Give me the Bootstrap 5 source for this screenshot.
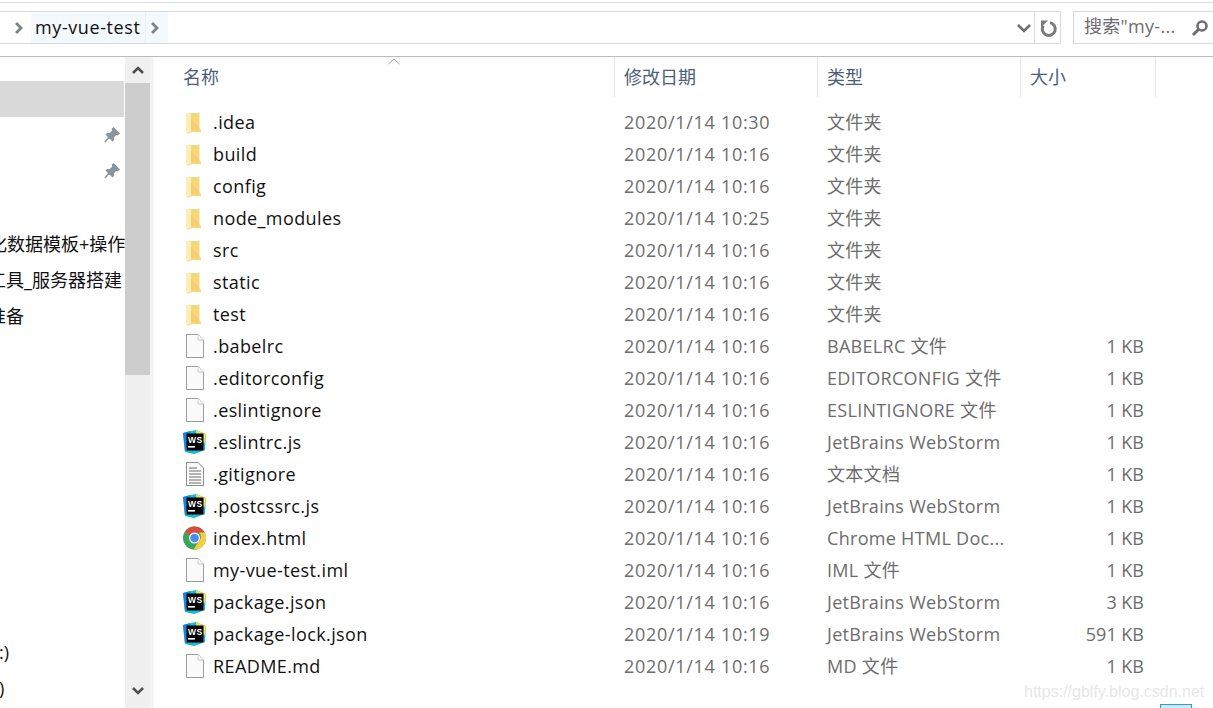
<!DOCTYPE html>
<html lang="zh-CN" class="h-100">
<head>
    <meta charset="UTF-8">
    <meta name="viewport" content="width=device-width, initial-scale=1.0">
    <title>my-vue-test</title>
    <link href="https://cdn.jsdelivr.net/npm/bootstrap@5.3.3/dist/css/bootstrap.min.css" rel="stylesheet">
    <style>
        html, body { height: 708px; overflow: hidden; }
        body {
            font-family: "Open Sans", "Noto Sans CJK SC", sans-serif;
            font-size: 18px;
            color: #111;
            background: #fff;
        }
        .top-rule { height: 1px; margin-top: 2px; background: #dcdfe4; }
        .tool-bar { padding-top: 8px; padding-bottom: 12px; border-bottom: 1px solid #bcbcbc; }
        .addr-box { width: 1061px; height: 33px; border: 1px solid #d9d9d9; border-left: 0; }
        .crumb-arrow { width: 31px; padding-left: 7px; }
        .crumb-name { height: 31px; padding: 0 4px; background: #f3f9fe; border-right: 1px solid #e6f0fa; line-height: 30px; letter-spacing: .6px; }
        .crumb-next { width: 22px; height: 31px; background: #f3f9fe; padding-right: 3px; }
        .addr-end { width: 26px; height: 31px; border-left: 1px solid #d9d9d9; padding-left: 2px; }
        .addr-drop { width: 20px; }
        .search-box { width: 152px; height: 33px; margin-left: 12px; border: 1px solid #d9d9d9; border-right: 0; color: #6d6d6d; padding-left: 10px; line-height: 29px; }
        .search-text { width: 99px; letter-spacing: .3px; }
        .side-pane { width: 150px; }
        .side-list { width: 125px; padding-top: 24px; }
        .side-row { height: 36px; line-height: 38px; white-space: nowrap; overflow: hidden; }
        .side-row.is-selected { background: #d9d9d9; width: 124px; }
        .side-gap { height: 12px; }
        .side-text { display: block; }
        .side-pin { width: 124px; padding-right: 4px; }
        .scroll-track { width: 25px; background: #f0f0f0; }
        .scroll-btn { height: 26px; }
        .scroll-thumb { height: 292px; background: #cdcdcd; }
        .pane-gap { width: 4px; background: #f3f3f3; border-right: 1px solid #f8f8f8; }
        .file-head { height: 40px; color: #4c607a; line-height: 40px; position: relative; }
        .col-name { width: 461px; padding-left: 29px; }
        .col-date { width: 203px; padding-left: 9px; }
        .col-type { width: 203px; padding-left: 9px; }
        .col-size { width: 135px; padding-left: 9px; }
        .file-head > div { border-right: 1px solid #e5e5e5; }
        .sort-mark { position: absolute; left: 234px; top: 1px; }
        .file-list { padding-top: 9px; }
        .file-row { height: 32px; line-height: 32px; white-space: nowrap; }
        .file-icon { width: 24px; height: 24px; margin-right: 7px; }
        .row-name { width: 461px; padding-left: 28px; letter-spacing: .4px; }
        .row-date { width: 203px; padding-left: 9px; color: #6d6d6d; letter-spacing: .7px; }
        .row-type { width: 203px; padding-left: 9px; color: #6d6d6d; overflow: hidden; letter-spacing: .3px; }
        .row-size { width: 123px; text-align: right; color: #6d6d6d; }
        .mark-text { position: absolute; left: 1024px; top: 680px; font-family: "Liberation Sans", sans-serif; font-size: 16px; color: #e7e7e7; }
        .sel-bit { position: absolute; left: 1160px; top: 704px; width: 32px; height: 6px; background: #cce8ff; border: 1px solid #26a0da; }
    </style>
</head>
<body class="d-flex flex-column position-relative">
    <svg width="0" height="0" class="position-absolute">
        <symbol id="ico-folder" viewBox="0 0 24 24">
            <path d="M4.500 3 L17.500 3 L17.500 20 L19 20 L19 22 L10 22 L4.500 24 Z" fill="#f6d77c"/>
            <path d="M4.500 3 L9 3 L9 21 L4.500 24 Z" fill="#fdeeb5"/>
            <path d="M9 9 L19 20 L9 20 Z" fill="#efc860" opacity=".5"/>
        </symbol>
        <symbol id="ico-file" viewBox="0 0 24 24">
            <path d="M4.500 .5 H16 L21.500 6 V23.500 H4.500 Z" fill="#fbfbfb" stroke="#9b9b9b"/>
            <path d="M16 .5 V6 H21.500" fill="#fff" stroke="#c4c4c4"/>
        </symbol>
        <symbol id="ico-text" viewBox="0 0 24 24">
            <path d="M4.500 .5 H16 L21.500 6 V23.500 H4.500 Z" fill="#fbfbfb" stroke="#8e8e8e"/>
            <path d="M7 6 H15 M7 9 H19 M7 12 H19 M7 15 H19 M7 18 H19 M7 21 H19" stroke="#6f6f6f" stroke-width="1.200"/>
        </symbol>
        <symbol id="ico-ws" viewBox="0 0 24 24">
            <path d="M1 3 L14 0 L24 4 L23 20 L12 24 L3 22 Z" fill="#16b9d8"/>
            <path d="M14 0 L24 4 L23 13 L15 8 Z" fill="#f5e24a"/>
            <path d="M1 3 L8 1 L6 12 L3 22 Z" fill="#1e82dc"/>
            <rect x="4.500" y="3.500" width="17" height="17" fill="#000"/>
            <text x="6" y="12.500" font-family="Liberation Sans, sans-serif" font-size="8.500" font-weight="700" fill="#fff">WS</text>
            <rect x="6" y="16" width="7" height="1.600" fill="#fff"/>
        </symbol>
        <symbol id="ico-chrome" viewBox="0 0 24 24">
            <circle cx="12.500" cy="12" r="11.500" fill="#3ba55b"/>
            <path d="M12.500 .5 A11.500 11.500 0 0 1 22.500 6.500 L12.500 6.500 A5.500 5.500 0 0 0 7.500 9.500 L3.300 5 A11.500 11.500 0 0 1 12.500 .5 Z" fill="#dd4a3d"/>
            <path d="M22.500 6.500 A11.500 11.500 0 0 1 11.500 23.500 L17 15 A5.500 5.500 0 0 0 17 6.500 Z" fill="#f8cd3f"/>
            <circle cx="12.500" cy="12" r="5.500" fill="#fff"/>
            <circle cx="12.500" cy="12" r="4.300" fill="#4c8bf0"/>
        </symbol>
        <symbol id="ico-pin" viewBox="0 0 16 16">
            <path d="M9.500 1 L15 6.500 L13.500 7.500 L12 7 L9 10.500 L9.500 12.500 L8.500 13.500 L2.500 7.500 L3.500 6.500 L5.500 7 L9 4 L8.500 2 Z M5 10 L1 15" fill="#8a959e" stroke="#8a959e" stroke-width="1.500"/>
        </symbol>
        <symbol id="ico-chev" viewBox="0 0 10 12">
            <path d="M2 1 L7 6 L2 11" fill="none" stroke="#7d8489" stroke-width="2.800"/>
        </symbol>
    </svg>

    <div class="top-rule"></div>
    <div class="tool-bar d-flex">
        <div class="addr-box d-flex align-items-center flex-shrink-0">
            <div class="crumb-arrow d-flex justify-content-center"><svg width="10" height="12"><use href="#ico-chev"/></svg></div>
            <div class="crumb-name">my-vue-test</div>
            <div class="crumb-next d-flex align-items-center justify-content-center"><svg width="10" height="12"><use href="#ico-chev"/></svg></div>
            <div class="flex-grow-1"></div>
            <div class="addr-drop d-flex justify-content-center">
                <svg width="16" height="10" viewBox="0 0 16 10"><path d="M2 2 L8 8 L14 2" fill="none" stroke="#6f6f6f" stroke-width="2.600"/></svg>
            </div>
            <div class="addr-end d-flex align-items-center justify-content-center">
                <svg width="20" height="20" viewBox="0 0 20 20"><path d="M11 4.600 A6.500 6.500 0 1 1 4.300 7.500" fill="none" stroke="#7a7a7a" stroke-width="3"/><path d="M2 2.500 L9 2.500 L2 9.500 Z" fill="#7a7a7a"/></svg>
            </div>
        </div>
        <div class="search-box d-flex flex-shrink-0">
            <div class="search-text text-nowrap">搜索"my-...</div>
            <div class="d-flex align-items-center ms-2">
                <svg width="18" height="18" viewBox="0 0 18 18"><circle cx="11" cy="7" r="4.500" fill="none" stroke="#6e6e6e" stroke-width="2.600"/><path d="M7.500 10.500 L2 16" stroke="#6e6e6e" stroke-width="3"/></svg>
            </div>
        </div>
    </div>

    <div class="d-flex flex-grow-1">
        <div class="side-pane d-flex flex-shrink-0">
            <div class="side-list" id="sideList"></div>
            <div class="scroll-track d-flex flex-column">
                <div class="scroll-btn d-flex align-items-center justify-content-center">
                    <svg width="14" height="10" viewBox="0 0 14 10"><path d="M2 8 L7 3 L12 8" fill="none" stroke="#505050" stroke-width="2.600"/></svg>
                </div>
                <div class="scroll-thumb"></div>
                <div class="flex-grow-1"></div>
                <div class="scroll-btn d-flex align-items-center justify-content-center mb-1">
                    <svg width="14" height="10" viewBox="0 0 14 10"><path d="M2 2 L7 7 L12 2" fill="none" stroke="#505050" stroke-width="2.600"/></svg>
                </div>
            </div>
        </div>
        <div class="pane-gap flex-shrink-0"></div>
        <div class="flex-grow-1">
            <div class="file-head d-flex">
                <div class="col-name">名称</div>
                <div class="col-date">修改日期</div>
                <div class="col-type">类型</div>
                <div class="col-size">大小</div>
                <svg class="sort-mark" width="12" height="7" viewBox="0 0 12 7"><path d="M.5 6 L6 1 L11.500 6" fill="none" stroke="#9a9a9a"/></svg>
            </div>
            <div class="file-list" id="fileList"></div>
        </div>
    </div>

    <div class="mark-text">https://gblfy.blog.csdn.net</div>
    <div class="sel-bit"></div>

    <script>
        // Explorer rows
        const files = [
            ['ico-folder', '.idea', '2020/1/14 10:30', '文件夹', ''],
            ['ico-folder', 'build', '2020/1/14 10:16', '文件夹', ''],
            ['ico-folder', 'config', '2020/1/14 10:16', '文件夹', ''],
            ['ico-folder', 'node_modules', '2020/1/14 10:25', '文件夹', ''],
            ['ico-folder', 'src', '2020/1/14 10:16', '文件夹', ''],
            ['ico-folder', 'static', '2020/1/14 10:16', '文件夹', ''],
            ['ico-folder', 'test', '2020/1/14 10:16', '文件夹', ''],
            ['ico-file', '.babelrc', '2020/1/14 10:16', 'BABELRC 文件', '1 KB'],
            ['ico-file', '.editorconfig', '2020/1/14 10:16', 'EDITORCONFIG 文件', '1 KB'],
            ['ico-file', '.eslintignore', '2020/1/14 10:16', 'ESLINTIGNORE 文件', '1 KB'],
            ['ico-ws', '.eslintrc.js', '2020/1/14 10:16', 'JetBrains WebStorm', '1 KB'],
            ['ico-text', '.gitignore', '2020/1/14 10:16', '文本文档', '1 KB'],
            ['ico-ws', '.postcssrc.js', '2020/1/14 10:16', 'JetBrains WebStorm', '1 KB'],
            ['ico-chrome', 'index.html', '2020/1/14 10:16', 'Chrome HTML Doc...', '1 KB'],
            ['ico-file', 'my-vue-test.iml', '2020/1/14 10:16', 'IML 文件', '1 KB'],
            ['ico-ws', 'package.json', '2020/1/14 10:16', 'JetBrains WebStorm', '3 KB'],
            ['ico-ws', 'package-lock.json', '2020/1/14 10:19', 'JetBrains WebStorm', '591 KB'],
            ['ico-file', 'README.md', '2020/1/14 10:16', 'MD 文件', '1 KB']
        ];

        document.getElementById('fileList').innerHTML = files.map(f => `
            <div class="file-row d-flex">
                <div class="row-name d-flex align-items-center">
                    <svg class="file-icon"><use href="#${f[0]}"/></svg>
                    <span>${f[1]}</span>
                </div>
                <div class="row-date">${f[2]}</div>
                <div class="row-type">${f[3]}</div>
                <div class="row-size">${f[4]}</div>
            </div>`).join('');

        // Left tree, scrolled sideways so the text starts off screen
        const side = [
            ['sel'], ['pin'], ['pin'], [''],
            ['化数据模板+操作', -11], ['工具_服务器搭建', -12], ['准备', -12],
            [''], [''], [''], [''], [''], [''], [''], [''],
            ['gap'],
            [':)', -1], [')', -1]
        ];
        document.getElementById('sideList').innerHTML = side.map(s => {
            if (s[0] === 'sel') return '<div class="side-row is-selected"></div>';
            if (s[0] === 'gap') return '<div class="side-gap"></div>';
            if (s[0] === 'pin') return '<div class="side-row side-pin d-flex align-items-center justify-content-end"><svg width="16" height="16"><use href="#ico-pin"/></svg></div>';
            return `<div class="side-row"><span class="side-text" style="margin-left:${s[1] || 0}px">${s[0]}</span></div>`;
        }).join('');
    </script>
</body>
</html>
